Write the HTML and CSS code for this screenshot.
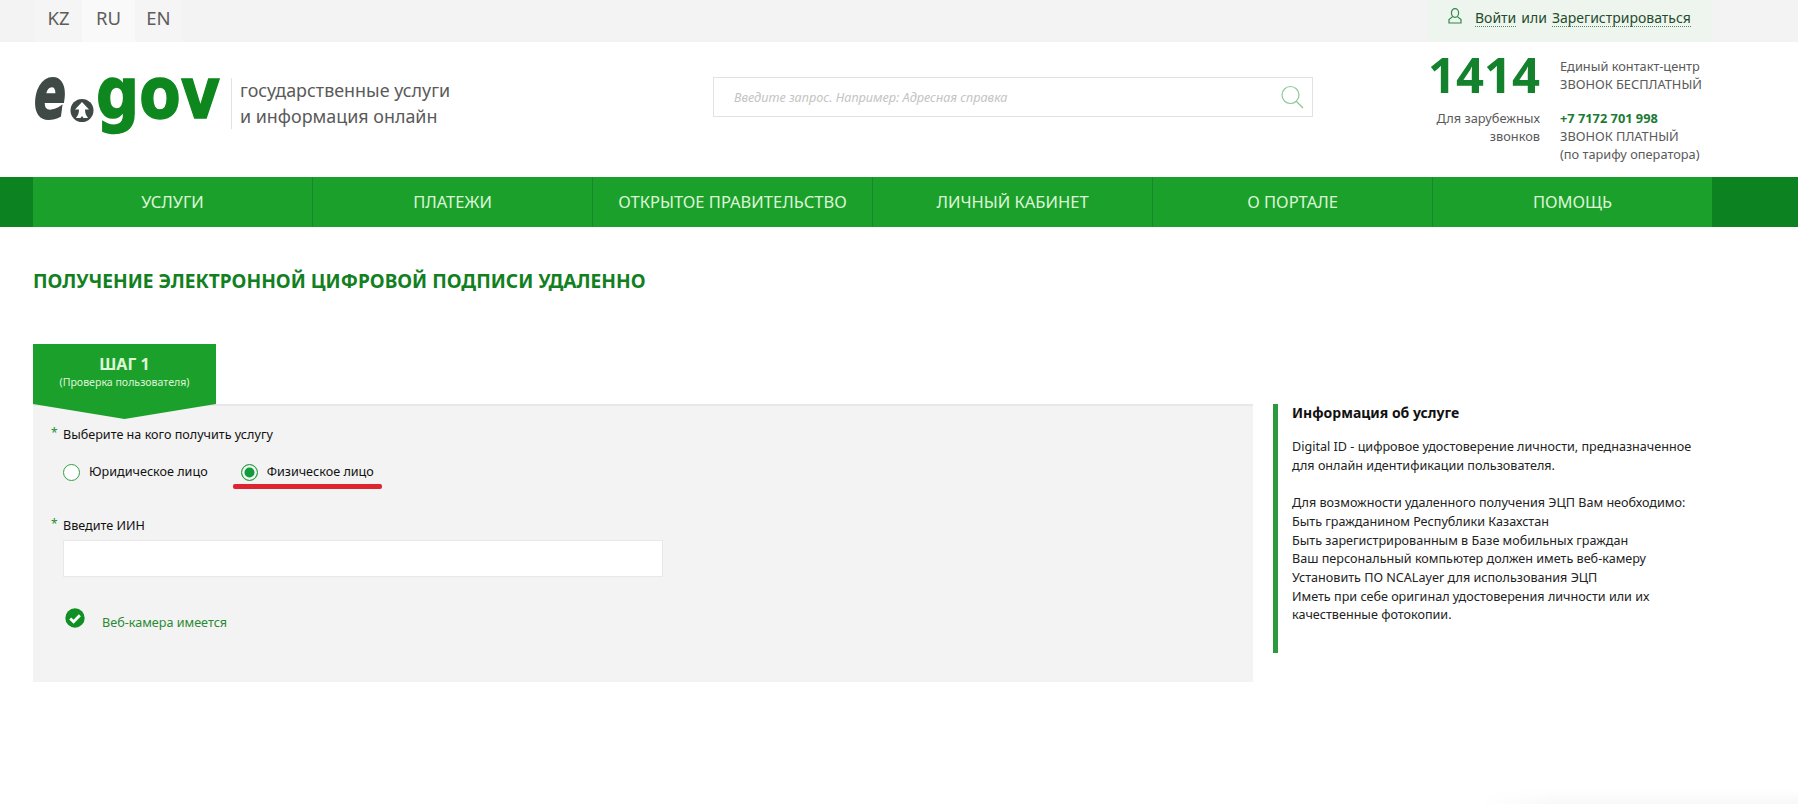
FILE: index.html
```html
<!DOCTYPE html>
<html lang="ru">
<head>
    <meta charset="UTF-8">
    <meta name="viewport" content="width=device-width, initial-scale=1.0">
    <title>Получение электронной цифровой подписи удаленно</title>
    <link rel="stylesheet" href="styles.css">
</head>
<body>
    <div class="topbar">
        <ul class="langs">
            <li class="lang">KZ</li>
            <li class="lang lang-active">RU</li>
            <li class="lang">EN</li>
        </ul>
        <div class="login">
            <svg class="login-icon" width="14" height="16" viewBox="0 0 14 16" fill="none" stroke="#2f8a4a" stroke-width="1.2">
                <ellipse cx="7" cy="5" rx="3.6" ry="4.3"/>
                <path d="M4.6 8.6 1 11.6V15h12v-3.4L9.4 8.6"/>
            </svg>
            <a class="login-link" href="#">Войти</a>
            <span class="login-or">или</span>
            <a class="login-link" href="#">Зарегистрироваться</a>
        </div>
    </div>

    <header class="header">
        <div class="brand">
            <svg class="logo" width="188" height="60" viewBox="0 0 188 60">
                <text class="logo-e" x="1" y="42" textLength="32" lengthAdjust="spacingAndGlyphs">e</text>
                <circle cx="49" cy="34.5" r="11.5" fill="#3f4a47"/>
                <path d="M49 26 42 33.5h4C46 37 45 39.5 43 42h4.500L49 40l1.500 2H55C53 39.500 52 37 52 33.500h4z" fill="#fff"/>
                <text class="logo-gov" x="63" y="42" textLength="124" lengthAdjust="spacingAndGlyphs">gov</text>
            </svg>
            <div class="brand-text">государственные услуги<br>и информация онлайн</div>
        </div>

        <div class="search">
            <span class="search-hint">Введите запрос. Например: Адресная справка</span>
            <svg width="24" height="24" viewBox="0 0 24 24" fill="none" stroke="#8cc79a" stroke-width="1.2">
                <circle cx="10.5" cy="10" r="8.5"/>
                <path d="M16.5 16.5 23 23"/>
            </svg>
        </div>

        <div class="contacts">
            <div class="contact-number">1414</div>
            <div class="contact-note">Единый контакт-центр<br>ЗВОНОК БЕСПЛАТНЫЙ</div>
            <div class="contact-abroad">Для зарубежных<br>звонков</div>
            <div class="contact-note"><b class="contact-phone">+7 7172 701 998</b><br>ЗВОНОК ПЛАТНЫЙ<br>(по тарифу оператора)</div>
        </div>
    </header>

    <nav class="nav">
        <a class="nav-item" href="#">УСЛУГИ</a>
        <a class="nav-item" href="#">ПЛАТЕЖИ</a>
        <a class="nav-item" href="#">ОТКРЫТОЕ ПРАВИТЕЛЬСТВО</a>
        <a class="nav-item" href="#">ЛИЧНЫЙ КАБИНЕТ</a>
        <a class="nav-item" href="#">О ПОРТАЛЕ</a>
        <a class="nav-item" href="#">ПОМОЩЬ</a>
    </nav>

    <main class="content">
        <h1 class="page-title">ПОЛУЧЕНИЕ ЭЛЕКТРОННОЙ ЦИФРОВОЙ ПОДПИСИ УДАЛЕННО</h1>

        <div class="columns">
            <section class="wizard">
                <div class="step-tab">
                    <div class="step-name">ШАГ 1</div>
                    <div class="step-sub">(Проверка пользователя)</div>
                </div>
                <form class="panel">
                    <div class="field-label">Выберите на кого получить услугу</div>
                    <div class="radios">
                        <label class="radio"><span class="radio-dot"></span>Юридическое лицо</label>
                        <label class="radio radio-checked"><span class="radio-dot"></span>Физическое лицо</label>
                    </div>
                    <div class="field-label field-iin">Введите ИИН</div>
                    <input class="text-input" type="text">
                    <div class="camera">
                        <svg width="20" height="20" viewBox="0 0 20 20">
                            <circle cx="10" cy="10" r="9.7" fill="#0f8f24"/>
                            <path d="M5.2 10.4 8.6 13.8 14.9 7.2" fill="none" stroke="#fff" stroke-width="2.8"/>
                        </svg>
                        <span>Веб-камера имеется</span>
                    </div>
                </form>
            </section>

            <aside class="info">
                <h3 class="info-title">Информация об услуге</h3>
                <p class="info-text">Digital ID - цифровое удостоверение личности, предназначенное<br>для онлайн идентификации пользователя.</p>
                <p class="info-text">Для возможности удаленного получения ЭЦП Вам необходимо:<br>Быть гражданином Республики Казахстан<br>Быть зарегистрированным в Базе мобильных граждан<br>Ваш персональный компьютер должен иметь веб-камеру<br>Установить ПО NCALayer для использования ЭЦП<br>Иметь при себе оригинал удостоверения личности или их<br>качественные фотокопии.</p>
            </aside>
        </div>
    </main>

    <div class="corner-fade"></div>
</body>
</html>
```

FILE: styles.css
```css
* {
    box-sizing: border-box;
}
body {
    margin: 0;
    height: 804px;
    overflow: hidden;
    background: #fff;
    font-family: "Noto Sans", Arial, sans-serif;
    color: #111;
}
a {
    text-decoration: none;
}

/* top bar */
.topbar {
    display: flex;
    justify-content: space-between;
    height: 42px;
    padding: 0 86px 0 35px;
    background: #f3f3f3;
}
.langs {
    display: flex;
    margin: 0;
    padding: 0;
    list-style: none;
}
.lang {
    width: 47px;
    line-height: 35px;
    font-size: 18.5px;
    text-align: center;
    color: #5d5d5d;
    background: #f5f5f5;
}
.lang-active {
    width: 53px;
    background: #f9f9f9;
}
.login {
    display: flex;
    align-items: flex-start;
    gap: 5px;
    width: 284px;
    padding: 9px 0 0 20px;
    background: #eef5ee;
    font-size: 14px;
    line-height: 17px;
    color: #1f4d2c;
}
.login-icon {
    margin-top: -1px;
    margin-right: 8px;
}
.login-link {
    color: #1f4d2c;
    border-bottom: 1px dotted #4c8a5c;
}

/* header */
.header {
    display: flex;
    height: 135px;
    padding: 0 0 0 33px;
}
.brand {
    display: flex;
    align-items: flex-start;
    width: 680px;
    padding-top: 34px;
}
.logo {
    overflow: visible;
}
.logo-e {
    font: italic 700 72px "DejaVu Sans", sans-serif;
    fill: #3f4a47;
    stroke: #3f4a47;
    stroke-width: 2;
}
.logo-gov {
    font: 700 72px "DejaVu Sans", sans-serif;
    fill: #0e871f;
    stroke: #0e871f;
    stroke-width: 1.5;
}
.brand-text {
    margin: 2px 0 0 10px;
    padding-left: 8px;
    border-left: 1px solid #e2e2e2;
    font-size: 17.9px;
    line-height: 25.5px;
    color: #5a5a5a;
}
.search {
    display: flex;
    align-items: center;
    justify-content: space-between;
    width: 600px;
    height: 40px;
    margin-top: 35px;
    padding: 0 8px 0 20px;
    border: 1px solid #e2e2e2;
}
.search-hint {
    font-size: 12.7px;
    font-style: italic;
    color: #c4c4c4;
}
.contacts {
    display: grid;
    grid-template-columns: 112px auto;
    column-gap: 20px;
    align-items: start;
    margin-left: 115px;
    padding-top: 14px;
    font-size: 12.8px;
    line-height: 18px;
    color: #5a5a5a;
}
.contact-number {
    font-size: 49px;
    line-height: 37px;
    font-weight: 700;
    color: #14812c;
    text-align: right;
}
.contact-note {
    padding-top: 1.2px;
}
.contact-abroad {
    padding-top: 1.2px;
    text-align: right;
}
.contact-phone {
    color: #1d7a36;
}

/* nav */
.nav {
    display: grid;
    grid-template-columns: repeat(5, 280px) 279px;
    height: 50px;
    padding-left: 33px;
    background: #0c8320;
}
.nav-item {
    border-right: 1px solid #168a28;
    background: #1ca02c;
    font-size: 16.5px;
    line-height: 50px;
    text-align: center;
    color: #dcf7d6;
}
.nav-item:last-child {
    border-right: none;
}

/* content */
.content {
    padding: 0 33px;
}
.page-title {
    margin: 42px 0 0;
    font-size: 19.1px;
    line-height: 24px;
    font-weight: 700;
    color: #12801f;
}
.columns {
    display: flex;
    gap: 20px;
    margin-top: 51px;
}
.wizard {
    width: 1220px;
}
.step-tab {
    position: relative;
    z-index: 1;
    width: 183px;
    height: 75px;
    padding-top: 9px;
    text-align: center;
    background: #1ca02c;
    color: #dcf7d6;
    clip-path: polygon(0 0, 100% 0, 100% 60px, 50% 100%, 0 60px);
}
.step-name {
    font-size: 16px;
    line-height: 22px;
    font-weight: 700;
}
.step-sub {
    font-size: 10.6px;
    line-height: 15px;
}
.panel {
    height: 278px;
    margin-top: -15px;
    padding: 20px 0 0 30px;
    border-top: 2px solid #e8e8e8;
    background: #f3f3f3;
}
.field-label {
    position: relative;
    font-size: 12.6px;
    line-height: 18px;
    color: #111;
}
.field-label::before {
    content: "*";
    position: absolute;
    left: -12px;
    top: -2px;
    font-size: 12px;
    color: #1c8f2e;
}
.radios {
    display: flex;
    gap: 33px;
    margin-top: 19px;
}
.radio {
    position: relative;
    display: flex;
    align-items: center;
    gap: 9px;
    font-size: 12.6px;
    line-height: 18px;
}
.radio-dot {
    width: 17px;
    height: 17px;
    border: 1px solid #2fa048;
    border-radius: 50%;
    background: #fff;
}
.radio-checked .radio-dot {
    background: #109b3c;
    box-shadow: inset 0 0 0 2.5px #f3f3f3;
}
/* red hand-drawn mark under the selected option */
.radio-checked::after {
    content: "";
    position: absolute;
    left: -8px;
    right: -8px;
    bottom: -8px;
    height: 5px;
    border-radius: 2px;
    background: #dd2430;
}
.field-iin {
    margin-top: 36px;
}
.text-input {
    display: block;
    width: 600px;
    height: 37px;
    margin-top: 5px;
    border: 1px solid #e8e8e8;
    background: #fff;
}
.camera {
    display: flex;
    align-items: flex-start;
    gap: 17px;
    margin-top: 31px;
    padding-left: 2px;
    font-size: 12.6px;
    line-height: 18px;
    color: #2a8a34;
}
.camera span {
    margin-top: 6px;
}

/* sidebar */
.info {
    width: 430px;
    height: 249px;
    margin-top: 60px;
    padding: 0 0 0 14px;
    border-left: 5px solid #2a9a3c;
}
.info-title {
    margin: 0 0 16px;
    font-size: 14px;
    line-height: 18px;
    font-weight: 700;
    color: #111;
}
.info-text {
    margin: 0 0 18.7px;
    font-size: 12.6px;
    line-height: 18.7px;
    color: #222;
}

.corner-fade {
    position: fixed;
    right: 0;
    bottom: 0;
    width: 320px;
    height: 14px;
    background: linear-gradient(#fff, #f8f8f8);
    -webkit-mask-image: linear-gradient(to right, transparent, #000 25%);
    mask-image: linear-gradient(to right, transparent, #000 25%);
}
```
